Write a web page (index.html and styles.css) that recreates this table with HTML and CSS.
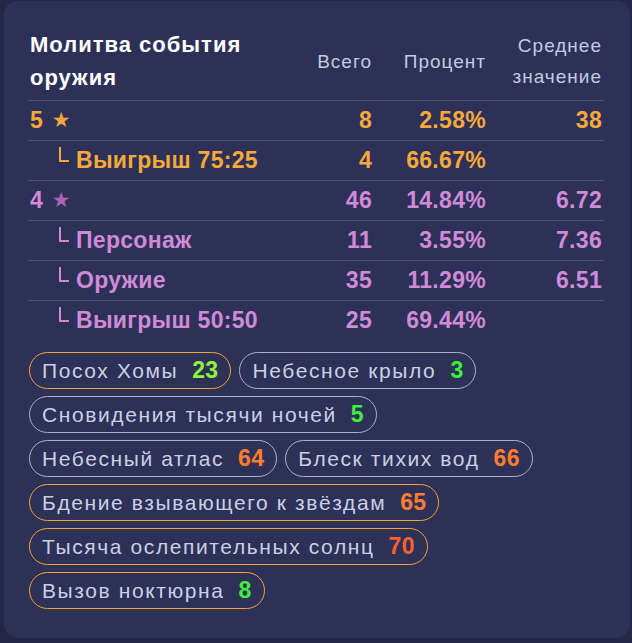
FILE: index.html
```html
<!DOCTYPE html>
<html lang="ru">
<head>
<meta charset="utf-8">
<link rel="stylesheet" href="styles.css">
</head>
<body>
<div class="card">
  <table class="stats">
    <colgroup>
      <col class="c-name"><col class="c-total"><col class="c-pct"><col class="c-avg">
    </colgroup>
    <thead>
      <tr>
        <th class="title">Молитва события<br>оружия</th>
        <th class="hd">Всего</th>
        <th class="hd">Процент</th>
        <th class="hd">Среднее<br>значение</th>
      </tr>
    </thead>
    <tbody>
      <tr class="gold">
        <td>5 <span class="star">★</span></td>
        <td class="num">8</td><td class="num">2.58%</td><td class="num">38</td>
      </tr>
      <tr class="gold">
        <td class="sub"><span class="corner"></span>Выигрыш 75:25</td>
        <td class="num">4</td><td class="num">66.67%</td><td class="num"></td>
      </tr>
      <tr class="purple">
        <td>4 <span class="star">★</span></td>
        <td class="num">46</td><td class="num">14.84%</td><td class="num">6.72</td>
      </tr>
      <tr class="purple">
        <td class="sub"><span class="corner"></span>Персонаж</td>
        <td class="num">11</td><td class="num">3.55%</td><td class="num">7.36</td>
      </tr>
      <tr class="purple">
        <td class="sub"><span class="corner"></span>Оружие</td>
        <td class="num">35</td><td class="num">11.29%</td><td class="num">6.51</td>
      </tr>
      <tr class="purple last">
        <td class="sub"><span class="corner"></span>Выигрыш 50:50</td>
        <td class="num">25</td><td class="num">69.44%</td><td class="num"></td>
      </tr>
    </tbody>
  </table>

  <div class="tags">
    <span class="tag up">Посох Хомы<b class="lime">23</b></span>
    <span class="tag">Небесное крыло<b class="green">3</b></span>
    <span class="tag">Сновидения тысячи ночей<b class="green">5</b></span>
    <span class="tag">Небесный атлас<b class="orange">64</b></span>
    <span class="tag">Блеск тихих вод<b class="orange">66</b></span>
    <span class="tag up">Бдение взывающего к звёздам<b class="orange">65</b></span>
    <span class="tag up">Тысяча ослепительных солнц<b class="red">70</b></span>
    <span class="tag up">Вызов ноктюрна<b class="green">8</b></span>
  </div>
</div>
</body>
</html>
```

FILE: styles.css
```css
html, body {
  margin: 0;
  padding: 0;
  background: #242846;
}
body {
  padding: 1px 2px 6px 4px;
  font-family: "Liberation Sans", Arial, sans-serif;
}
.card {
  background: #2d3157;
  border-radius: 14px;
  padding: 24px 26px 29px 24px;
  min-height: 583px;
}
.stats {
  width: 100%;
  border-collapse: collapse;
  table-layout: fixed;
}
.c-name { width: auto; }
.c-total { width: 80px; }
.c-pct { width: 114px; }
.c-avg { width: 116px; }
.stats th {
  padding: 3px 2px 6px;
  vertical-align: middle;
  border-bottom: 1px solid #4d5470;
}
.title {
  text-align: left;
  font-size: 22px;
  line-height: 33px;
  letter-spacing: 1px;
  font-weight: 700;
  color: #ffffff;
}
.hd {
  text-align: right;
  font-size: 19px;
  letter-spacing: 1px;
  font-weight: 400;
  color: #c3cadf;
  line-height: 31px;
}
.stats td {
  height: 39px;
  padding: 0 2px;
  font-size: 23px;
  letter-spacing: 0.3px;
  font-weight: 700;
  vertical-align: middle;
  border-bottom: 1px solid #4d5470;
  white-space: nowrap;
}
.stats tr.last td { border-bottom: none; }
.stats td.num { text-align: right; }
.gold { color: #f6a83a; }
.purple { color: #d08ad8; }
.star {
  font-family: "DejaVu Sans", sans-serif;
  font-size: 21px;
  margin-left: 2px;
  position: relative;
  top: -1px;
}
.purple .star { color: #a867b2; }
.sub { padding-left: 31px !important; }
.corner {
  display: inline-block;
  width: 10px;
  height: 15px;
  border-left: 2px solid currentColor;
  border-bottom: 2px solid currentColor;
  margin-right: 7px;
  position: relative;
  top: -6px;
  box-sizing: border-box;
}
.tags {
  display: flex;
  flex-wrap: wrap;
  gap: 7px 8px;
  margin-top: 12px;
  padding-left: 1px;
}
.tag {
  display: inline-flex;
  align-items: center;
  height: 37px;
  box-sizing: border-box;
  padding: 0 12px 0 12px;
  border: 1px solid #a9b1c9;
  border-radius: 19px;
  font-size: 21px;
  letter-spacing: 1.6px;
  color: #c9d0e3;
  white-space: nowrap;
}
.tag.up { border-color: #f3a430; }
.tag b {
  font-size: 23px;
  font-weight: 700;
  margin-left: 14px;
  letter-spacing: 0.3px;
}
.lime { color: #8ff43a; }
.green { color: #40ee3a; }
.orange { color: #ff7d2e; }
.red { color: #ff602e; }
```
